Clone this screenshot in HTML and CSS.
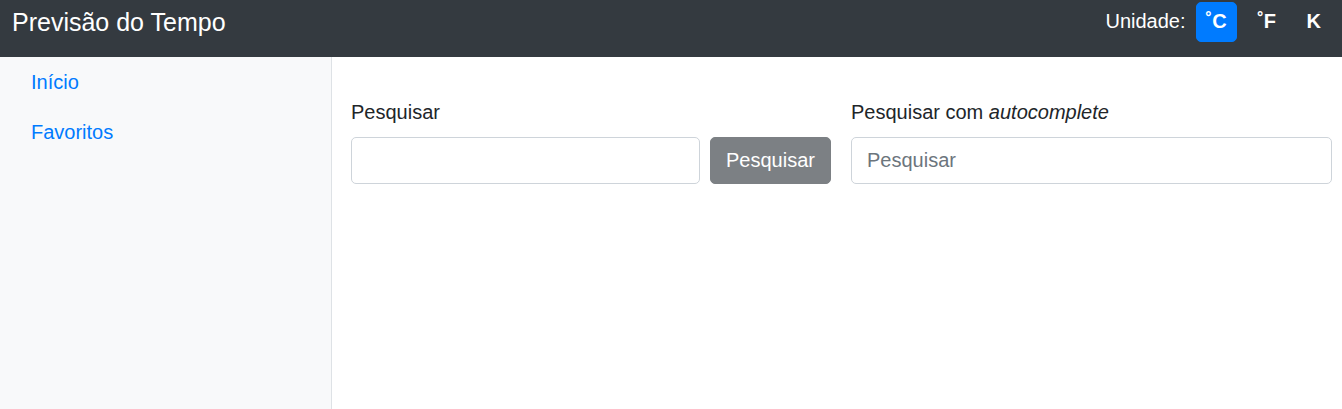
FILE: index.html
```html
<!DOCTYPE html>
<html lang="pt">
<head>
<meta charset="utf-8">
<title>Previsão do Tempo</title>
<link rel="stylesheet" href="styles.css">
</head>
<body>
<header class="navbar">
  <a class="brand" href="#">Previsão do Tempo</a>
  <div class="units">
    <span class="units-label">Unidade:</span>
    <button class="unit-btn active">˚C</button>
    <button class="unit-btn">˚F</button>
    <button class="unit-btn">K</button>
  </div>
</header>
<div class="layout">
  <nav class="sidebar">
    <a class="side-link" href="#">Início</a>
    <a class="side-link" href="#">Favoritos</a>
  </nav>
  <main class="main">
    <div class="cols">
      <div class="field">
        <label class="label">Pesquisar</label>
        <div class="search-row">
          <input class="input" type="text">
          <button class="btn-search">Pesquisar</button>
        </div>
      </div>
      <div class="field">
        <label class="label">Pesquisar com <em>autocomplete</em></label>
        <input class="input" type="text" placeholder="Pesquisar">
      </div>
    </div>
  </main>
</div>
</body>
</html>
```

FILE: styles.css
```css
* { box-sizing: border-box; }
html, body { margin: 0; height: 100%; }
body {
  font-family: "Liberation Sans", Arial, sans-serif;
  font-size: 20px;
  line-height: 30px;
  color: #212529;
  background: #fff;
  display: flex;
  flex-direction: column;
}
.navbar {
  height: 57px;
  flex: none;
  background: #343a40;
  display: flex;
  justify-content: space-between;
  align-items: flex-start;
  padding: 2px 11px 0 12px;
}
.brand {
  color: #fff;
  text-decoration: none;
  font-size: 25px;
  line-height: 36px;
  padding-top: 2px;
}
.units {
  display: flex;
  align-items: flex-start;
}
.units-label {
  color: #fff;
  line-height: 38px;
  margin-right: 10px;
}
.unit-btn {
  font-family: inherit;
  font-size: 20px;
  font-weight: bold;
  color: #fff;
  background: transparent;
  border: 1px solid transparent;
  border-radius: 5px;
  height: 40px;
  line-height: 36px;
  padding: 0 9px 2px;
  margin-left: 10.5px;
}
.unit-btn:first-of-type { margin-left: 0; }
.unit-btn.active { background: #007bff; border-color: #007bff; }
.layout {
  flex: 1;
  display: flex;
}
.sidebar {
  width: 332px;
  flex: none;
  background: #f8f9fa;
  border-right: 1px solid #dee2e6;
  display: flex;
  flex-direction: column;
  padding: 0 0 0 11px;
}
.side-link {
  color: #007bff;
  text-decoration: none;
  padding: 10px 20px;
  line-height: 30px;
}
.main {
  flex: 1;
  padding: 40px 10px 0 19px;
}
.cols {
  display: grid;
  grid-template-columns: 480px 1fr;
  column-gap: 20px;
}
.label {
  display: block;
  margin-bottom: 10px;
}
.label em { font-style: italic; }
.search-row {
  display: flex;
  gap: 10px;
}
.input {
  display: block;
  width: 100%;
  height: 47px;
  font-family: inherit;
  font-size: 20px;
  color: #495057;
  border: 1px solid #ced4da;
  border-radius: 5px;
  padding: 7.5px 15px;
  background: #fff;
}
.input::placeholder { color: #6c757d; }
.search-row .input { flex: 1; min-width: 0; }
.btn-search {
  flex: none;
  width: 121px;
  height: 47px;
  font-family: inherit;
  font-size: 20px;
  color: #fff;
  background: #7c8084;
  border: 1px solid #7c8084;
  border-radius: 5px;
  padding: 0;
}
```
